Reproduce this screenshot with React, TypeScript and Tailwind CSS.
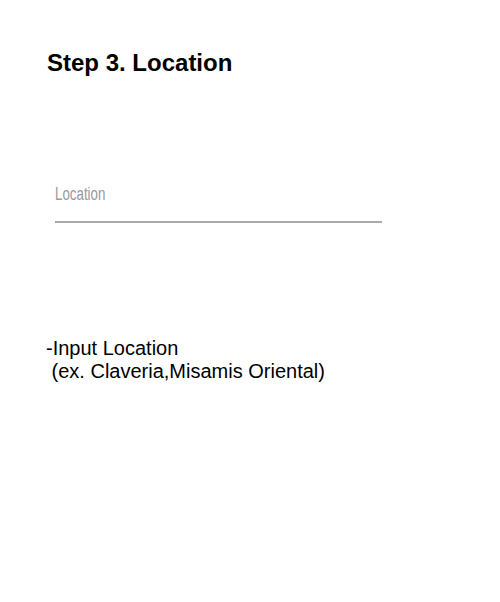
export default function App() {
  return (
    <div className="w-[500px] h-[602px] bg-white" style={{ fontFamily: '"Liberation Sans", Arial, sans-serif' }}>
      <div className="pl-[47px] pt-[49px]">
        <h1 className="text-[24px] leading-[28.8px] font-bold text-black">Step 3. Location</h1>
      </div>
      <div className="pl-[55px] pt-[106px]">
        <div className="w-[327px] border-b-2 border-[#aaaaaa] pb-[17px]">
          <span className="block h-[20px] text-[18px] leading-[20px] text-[#9a9a9a] origin-left scale-x-[0.74]">
            Location
          </span>
        </div>
      </div>
      <div className="pl-[46px] pt-[114px] text-[20px] leading-[23px] text-black whitespace-pre">
        <p>-Input Location</p>
        <p> (ex. Claveria,Misamis Oriental)</p>
      </div>
    </div>
  );
}
